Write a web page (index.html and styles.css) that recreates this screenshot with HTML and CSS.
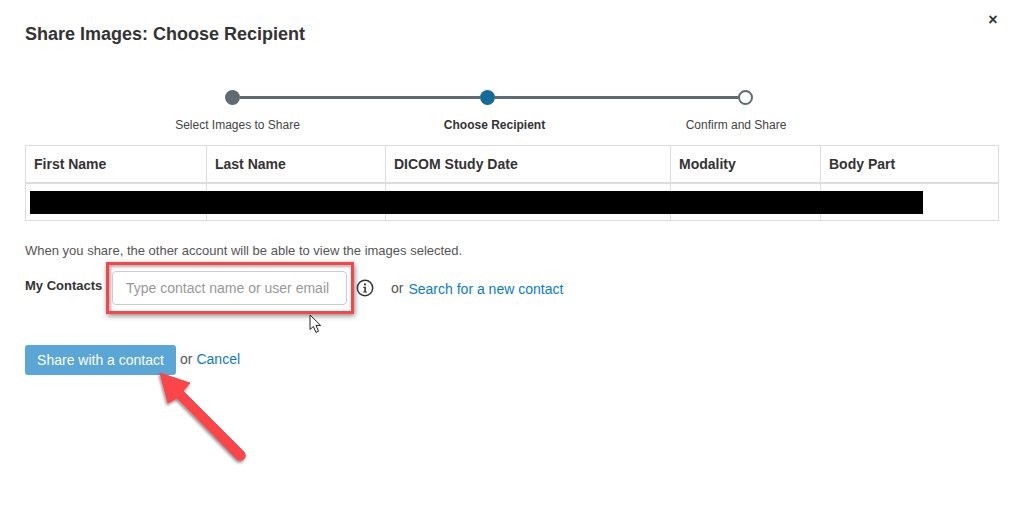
FILE: index.html
```html
<!DOCTYPE html>
<html lang="en">
<head>
<meta charset="utf-8">
<title>Share Images</title>
<link rel="stylesheet" href="styles.css">
</head>
<body>
<main class="modal">
  <button class="close" aria-label="Close">×</button>
  <h1 class="title">Share Images: Choose Recipient</h1>
  <div class="track">
    <span class="dot dot-done"></span><span class="line"></span>
    <span class="dot dot-current"></span><span class="line line-b"></span>
    <span class="dot dot-todo"></span>
  </div>
  <div class="labels">
    <span class="label label-a">Select Images to Share</span>
    <span class="label label-b">Choose Recipient</span>
    <span class="label label-c">Confirm and Share</span>
  </div>
  <div class="table-wrap">
    <table class="table">
      <colgroup><col class="c1"><col class="c2"><col class="c3"><col class="c4"><col class="c5"></colgroup>
      <thead><tr><th>First Name</th><th>Last Name</th><th>DICOM Study Date</th><th>Modality</th><th>Body Part</th></tr></thead>
      <tbody><tr><td></td><td></td><td></td><td></td><td></td></tr></tbody>
    </table>
    <div class="redact"></div>
  </div>
  <p class="note">When you share, the other account will be able to view the images selected.</p>
  <div class="contact-row">
    <label class="contact-label" for="contact">My Contacts</label>
    <div class="highlight"><input id="contact" class="contact-input" placeholder="Type contact name or user email"></div>
    <svg class="info" viewBox="0 0 18 18" width="18" height="18" aria-hidden="true">
      <circle cx="9" cy="9" r="7.7" fill="none" stroke="#333" stroke-width="1.5"/>
      <circle cx="9" cy="5.4" r="1.1" fill="#333"/>
      <path d="M7.3 7.8H9.9V12.4H11V13.5H7.2V12.4H8.3V8.9H7.3Z" fill="#333"/>
    </svg>
    <span class="or-search">or</span>
    <a class="link" href="#">Search for a new contact</a>
  </div>
  <div class="actions">
    <button class="share">Share with a contact</button>
    <span class="or-cancel">or</span>
    <a class="link" href="#">Cancel</a>
  </div>
</main>
<svg class="cursor" viewBox="0 0 14 20" width="14" height="20" aria-hidden="true">
  <path d="M1 1V15.5L4.4 12.4L6.9 18.4L9.5 17.2L7 11.4H11.6Z" fill="#fff" stroke="#222" stroke-width="1"/>
</svg>
<svg class="arrow" viewBox="0 0 110 110" width="110" height="110" aria-hidden="true">
  <defs>
    <filter id="sh" x="-20%" y="-20%" width="150%" height="150%"><feDropShadow dx="-1" dy="2" stdDeviation="1.6" flood-color="#000" flood-opacity=".45"/></filter>
  </defs>
  <path d="M10 8L40 18L33 26L94 87C98 92 92 98 87 94L27 33L18 38Z" fill="#fb4449" stroke="#fb4449" stroke-width="1" stroke-linejoin="round" filter="url(#sh)"/>
</svg>
</body>
</html>
```
FILE: styles.css
```css
* { box-sizing: border-box; }
html, body { margin: 0; background: #fff; }
body {
  position: relative;
  height: 519px;
  overflow: hidden;
  font-family: "Liberation Sans", Arial, sans-serif;
  color: #333;
}
.modal { position: relative; padding: 24px 25px 0; }
.close {
  position: absolute; top: 13px; right: 24px;
  width: 14px; height: 14px; padding: 0; border: 0; background: none;
  font: bold 16px/14px "Liberation Sans", Arial, sans-serif; color: #333;
}
.title { margin: 0; font-size: 18px; line-height: 20px; font-weight: bold; }
.track { display: flex; align-items: center; margin: 46px 0 0 200px; }
.dot { width: 15px; height: 15px; border-radius: 50%; flex: none; }
.dot-done { background: #5f6b70; }
.dot-current { background: #156a9a; }
.dot-todo { background: #fff; border: 2px solid #5f6b70; }
.line { width: 240px; height: 3px; background: #5f6b70; flex: none; }
.line-b { width: 243px; }
.labels { display: flex; margin-top: 13px; height: 15px; font-size: 12px; line-height: 15px; color: #444; }
.label { display: block; text-align: center; flex: none; }
.label-a { width: 125px; margin-left: 150px; }
.label-b { width: 103px; margin-left: 143px; font-weight: bold; color: #333; }
.label-c { width: 102px; margin-left: 139px; }
.table-wrap { position: relative; margin-top: 12px; width: 973px; }
.table { width: 973px; border-collapse: collapse; table-layout: fixed; }
.c1 { width: 181px; } .c2 { width: 179px; } .c3 { width: 285px; } .c4 { width: 150px; } .c5 { width: 178px; }
.table th, .table td { border: 1px solid #ddd; padding: 0 8px; }
.table th { height: 37px; border-bottom-width: 2px; text-align: left; font-size: 14px; font-weight: bold; }
.table td { height: 38px; }
.redact { position: absolute; left: 5px; top: 46px; width: 893px; height: 23px; background: #000; }
.note { margin: 22px 0 0; font-size: 13px; line-height: 15px; color: #555; }
.contact-row { display: flex; align-items: center; margin-top: 4px; height: 52px; font-size: 14px; }
.contact-label { width: 81px; flex: none; font-size: 13px; font-weight: bold; position: relative; top: -3px; }
.highlight {
  width: 248px; height: 52px; flex: none; padding: 6px 3px;
  border: 3px solid #fb4449; background: #fff;
  box-shadow: 1px 2px 5px rgba(0,0,0,.45), inset 2px 2px 3px rgba(0,0,0,.3);
}
.contact-input {
  display: block; width: 235px; height: 34px; padding: 0 13px;
  border: 1px solid #ccc; border-radius: 4px; background: #fff;
  font: 14px "Liberation Sans", Arial, sans-serif; color: #333;
}
.contact-input::placeholder { color: #999; opacity: 1; }
.info { margin-left: 2px; flex: none; }
.or-search { margin-left: 17px; font-size: 14px; color: #555; }
.link { color: #0a7cc4; text-decoration: none; font-size: 14px; }
.contact-row .link { margin-left: 5px; padding-top: 2px; }
.actions { display: flex; align-items: center; margin-top: 31px; font-size: 14px; }
.share {
  width: 151px; height: 30px; padding: 0; border: 0; border-radius: 3px;
  background: #5aa6d6; color: #fff; font: 14px "Liberation Sans", Arial, sans-serif;
}
.or-cancel { margin-left: 4px; color: #555; padding-bottom: 2px; }
.actions .link { margin-left: 4px; padding-bottom: 2px; }
.cursor { position: absolute; left: 309px; top: 314px; }
.arrow { position: absolute; left: 150px; top: 365px; }
```
